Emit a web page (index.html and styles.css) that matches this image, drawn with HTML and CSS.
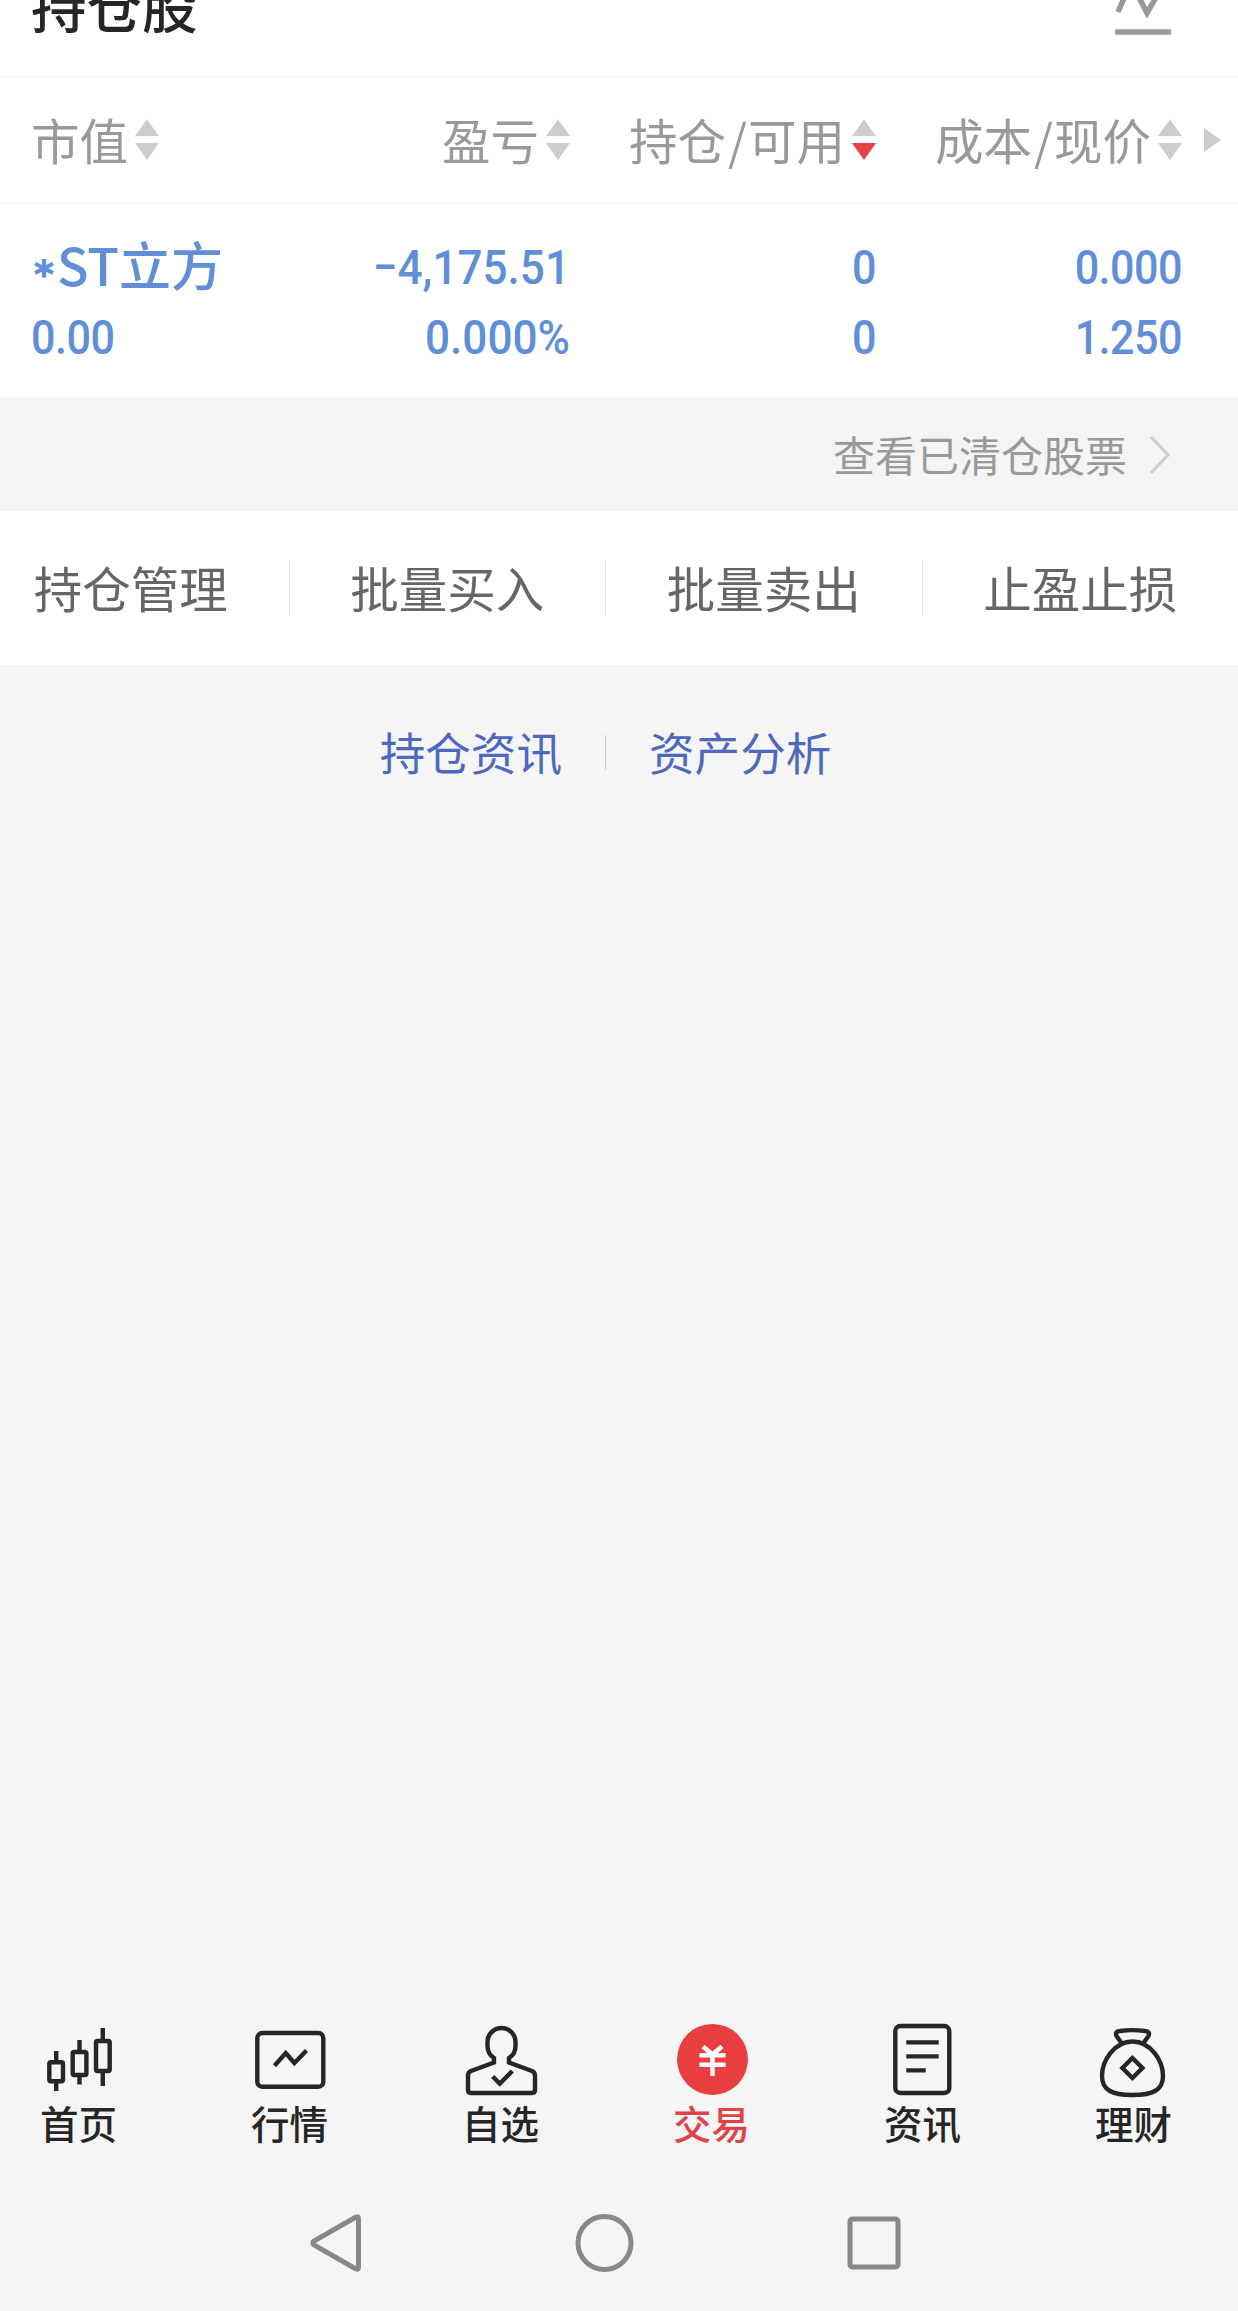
FILE: index.html
```html
<!DOCTYPE html>
<html lang="zh-CN">
<head>
	<meta charset="UTF-8">
	<meta name="viewport" content="width=device-width, initial-scale=1.0">
	<title>持仓股</title>
	<link rel="stylesheet" href="styles.css">
</head>
<body>
<svg class="defs" width="0" height="0">
	<symbol id="sort" viewBox="0 0 24 42">
		<path class="up" d="M12 0.5L24 17H0z"/>
		<path class="down" d="M0 24h24L12 41z"/>
	</symbol>
</svg>

<div class="title">
	<h1>持仓股</h1>
	<svg class="chart" width="58" height="60" viewBox="0 0 58 60"><path d="M4 37L17 7l16 31L48 12M1 57h56"/></svg>
</div>

<div class="row head">
	<div><span>市值</span><svg class="sort"><use href="#sort"/></svg></div>
	<div class="r"><span>盈亏</span><svg class="sort"><use href="#sort"/></svg></div>
	<div class="r"><span>持仓<b>/</b>可用</span><svg class="sort desc"><use href="#sort"/></svg></div>
	<div class="r"><span>成本<b>/</b>现价</span><svg class="sort"><use href="#sort"/></svg></div>
	<svg class="more" width="17" height="24" viewBox="0 0 17 24"><path d="M0 0l17 12L0 24z"/></svg>
</div>

<div class="row stock">
	<div>
		<div class="name"><span class="star">*</span>ST立方</div>
		<div class="num">0.00</div>
	</div>
	<div class="r">
		<div class="num wide">−4,175.51</div>
		<div class="num wide">0.000%</div>
	</div>
	<div class="r">
		<div class="num">0</div>
		<div class="num">0</div>
	</div>
	<div class="r">
		<div class="num">0.000</div>
		<div class="num">1.250</div>
	</div>
</div>

<div class="cleared">
	<span>查看已清仓股票</span>
	<svg width="22" height="40" viewBox="0 0 22 40"><path d="M2 3l17 18L2 39"/></svg>
</div>

<div class="tools">
	<a>持仓管理</a>
	<a>批量买入</a>
	<a>批量卖出</a>
	<a>止盈止损</a>
</div>

<div class="links">
	<a>持仓资讯</a>
	<i></i>
	<a>资产分析</a>
</div>

<div class="tabbar">
	<a>
		<svg viewBox="0 0 79 80"><rect x="10.300" y="42.300" width="13.700" height="19" rx="1.500"/><rect x="33.700" y="32" width="13.700" height="23" rx="1.500"/><rect x="57" y="21" width="13.700" height="30" rx="1.500"/><path d="M17.200 31v10M17.200 62v9M40.500 20v11M40.500 56v8.500M63.800 8v12M63.800 52v14"/></svg>
		<span>首页</span>
	</a>
	<a>
		<svg viewBox="0 0 79 80"><rect x="7.300" y="13" width="66" height="53.700" rx="5"/><path d="M24.500 45.800L35.700 33l8.700 10L56.500 30.500"/></svg>
		<span>行情</span>
	</a>
	<a>
		<svg viewBox="0 0 79 80"><path d="M33 38v4.500L10 51q-3 1.300-3 4.500V70q0 3 3 3h61q3 0 3-3V55.500q0-3.200-3-4.500L48 42.500V38q6.500-4 6.500-12v-4a14 14 0 0 0-28 0v4q0 8 6.500 12z"/><path d="M31.700 56.500l7 7.200L51.300 51"/></svg>
		<span>自选</span>
	</a>
	<a class="on">
		<svg viewBox="0 0 79 80"><circle cx="40.500" cy="39.400" r="35.500"/><path d="M31 26.500l9.500 8 9.500-8M40.500 33v23M27.500 35.300h26M27.500 44.800h26"/></svg>
		<span>交易</span>
	</a>
	<a>
		<svg viewBox="0 0 79 80"><rect x="12.300" y="6" width="54" height="67" rx="5"/><path d="M23.300 22.400h32.400M23.300 36.400h32.400M23.300 50.400h19.400"/></svg>
		<span>资讯</span>
	</a>
	<a>
		<svg viewBox="0 0 79 80"><path d="M38.500 21.500C20 21.500 8 41 8 56c0 14 10 19 30.500 19S69 70 69 56c0-15-12-34.500-30.500-34.500z"/><path d="M27.500 23l-5-7q-2-4.500 3.500-5 12.500-1.700 25 0 5.500.5 3.500 5l-5 7M38.400 38l10 10-10 10-10-10z"/></svg>
		<span>理财</span>
	</a>
</div>

<!-- system keys -->
<div class="sysbar">
	<svg width="60" height="60" viewBox="0 0 60 60"><path d="M50 4L8 28q-2.500 2 0 4l42 24q2.500 1 2.500-2V6q0-3-2.500-2z"/></svg>
	<svg width="60" height="60" viewBox="0 0 60 60"><circle cx="29.500" cy="30" r="26.500"/></svg>
	<svg width="60" height="60" viewBox="0 0 60 60"><rect x="6" y="6" width="48" height="48" rx="2.500"/></svg>
</div>
</body>
</html>
```
FILE: styles.css
```css
* {
	box-sizing: border-box;
}

html, body {
	margin: 0;
	padding: 0;
}

body {
	display: flex;
	flex-direction: column;
	height: 2311px;
	overflow: hidden;
	background: #f5f5f5;
	color: #262626;
	font-family: "Noto Sans CJK SC", sans-serif;
}

svg {
	display: block;
	flex: none;
	fill: none;
}

.defs {
	position: absolute;
}

/* title, partly scrolled out */
.title {
	display: flex;
	justify-content: space-between;
	align-items: flex-start;
	height: 77px;
	padding: 0 66px 0 31px;
	background: #fff;
	border-bottom: 1px solid #eee;
	overflow: hidden;
}

.title h1 {
	margin: -26px 0 0;
	font-size: 55.500px;
	line-height: 60px;
	font-weight: 500;
}

.title .chart {
	margin-top: -25px;
	stroke: #999;
	stroke-width: 5.5;
}

.row {
	display: grid;
	grid-template-columns: 233px 306px 306px 306px auto;
	padding-left: 31px;
	background: #fff;
}

.head {
	height: 127px;
	align-items: center;
	border-bottom: 1px solid #eee;
	color: #999;
	font-size: 48.500px;
	line-height: 60px;
}

.head div {
	display: flex;
	align-items: center;
}

.head span {
	margin-top: -3px;
}

.head b {
	margin: 0 1px 0 2px;
	font-weight: normal;
}

.head .r {
	justify-content: flex-end;
}

.sort {
	width: 24px;
	height: 42px;
	margin-left: 7px;
}

.sort.desc {
	--down: #e64044;
}

.up {
	fill: #ccc;
}

.down {
	fill: var(--down, #ccc);
}

.more {
	margin-left: 22px;
	fill: #ccc;
}

.stock {
	height: 193px;
	padding-top: 28px;
	color: #608fd8;
}

.stock .name {
	height: 70px;
	font-size: 52px;
	line-height: 63px;
	font-weight: 500;
	white-space: nowrap;
}

.star {
	position: relative;
	top: 1px;
	margin: 0 3px 0 3px;
	font-family: "DejaVu Sans", sans-serif;
	font-size: 38px;
	line-height: 1;
	font-weight: bold;
	-webkit-text-stroke: 1px #608fd8;
}

.num {
	height: 70px;
	font-family: Roboto, sans-serif;
	font-size: 49px;
	line-height: 72px;
	font-weight: 500;
	letter-spacing: -.6px;
	transform: scaleX(.88);
	transform-origin: 0 50%;
}

.r .num {
	text-align: right;
	transform-origin: 100% 50%;
}

.r .wide {
	letter-spacing: 0;
	transform: scaleX(.9);
}

.cleared {
	display: flex;
	justify-content: flex-end;
	align-items: center;
	height: 114px;
	padding-right: 67px;
	background: #f4f4f4;
	color: #999;
	font-size: 42px;
}

.cleared span {
	margin-top: -2px;
}

.cleared svg {
	margin-left: 22px;
	stroke: #ccc;
	stroke-width: 3;
}

.tools {
	display: flex;
	align-items: center;
	width: 1265px;
	height: 154px;
	margin-left: -27px;
	background: #fff;
	color: #666;
	font-size: 48.500px;
}

.tools a {
	flex: 1;
	height: 56px;
	line-height: 54px;
	text-align: center;
}

.tools a + a {
	border-left: 1px solid #e8e8e8;
}

.links {
	display: flex;
	justify-content: center;
	align-items: center;
	margin: 57px 27px 0 0;
	height: 60px;
	color: #4c68bf;
	font-size: 45.600px;
}

.links a {
	margin-top: -3px;
}

.links i {
	width: 1px;
	height: 35px;
	margin: 0 43px;
	background: #ccc;
}

.tabbar {
	display: grid;
	grid-template-columns: repeat(6, 211px);
	margin: auto 0 0 -27px;
	height: 170px;
}

.tabbar a {
	display: flex;
	flex-direction: column;
	align-items: center;
	font-size: 38.500px;
	line-height: 44px;
	font-weight: 500;
}

.tabbar svg {
	width: 79px;
	height: 80px;
	stroke: #262626;
	stroke-width: 4.4;
}

.tabbar .on {
	color: #dc4448;
}

.tabbar .on svg {
	stroke: #fff;
	stroke-width: 4.5;
}

.tabbar .on circle {
	fill: #e83e40;
	stroke: none;
}

.sysbar {
	display: flex;
	justify-content: space-between;
	width: 598px;
	height: 121px;
	margin-left: 306px;
	padding-top: 23px;
}

.sysbar svg {
	stroke: #888;
	stroke-width: 5;
}
```
